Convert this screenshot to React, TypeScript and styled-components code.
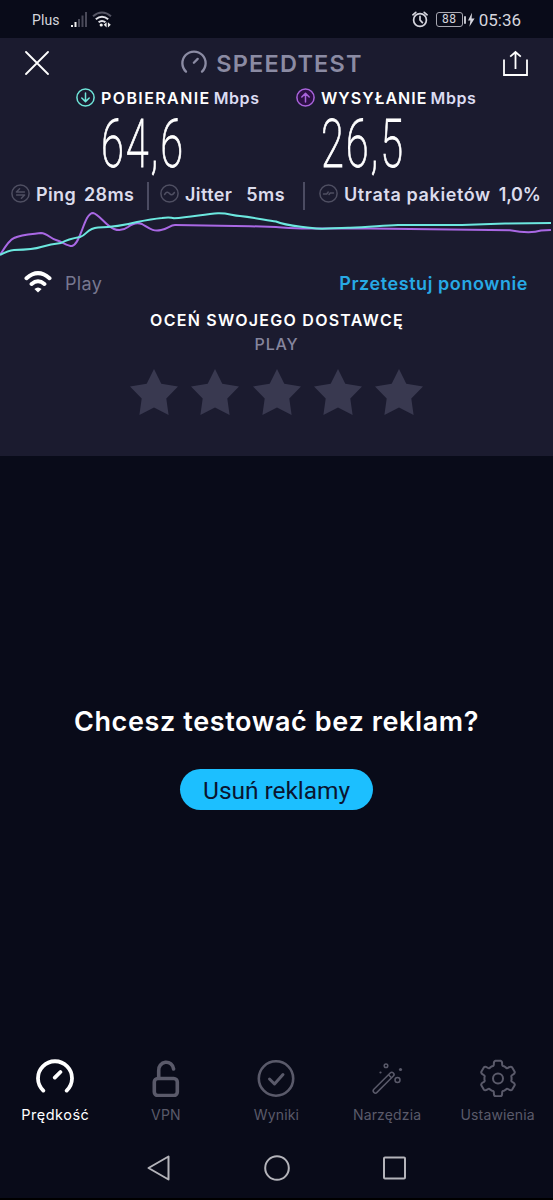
import React from "react";
import styled, { createGlobalStyle } from "styled-components";

const Global = createGlobalStyle`
  *, *::before, *::after { box-sizing: border-box; }
  html, body { margin: 0; background: #090b19; }
  body { font-family: Inter, "Liberation Sans", sans-serif; color: #fff; overflow: hidden; }
  svg { display: block; flex: none; }
  button { border: 0; padding: 0; margin: 0; background: none; color: inherit; font: inherit; }
`;

const Screen = styled.div`
  width: 553px;
  height: 1200px;
  display: flex;
  flex-direction: column;
  background: #090b19;
  border-bottom: 2px solid #000;
  overflow: hidden;
`;

const StatusBar = styled.header`
  height: 38px;
  padding: 1px 32px 0 32px;
  display: flex;
  align-items: center;
  font-family: Roboto, sans-serif;
  color: #d6d6de;
`;
const Carrier = styled.span`
  font-size: 14px;
  letter-spacing: 0.1px;
  width: 38px;
`;
const WifiStatus = styled.svg`
  margin-left: 4px;
`;
const StatusRight = styled.div`
  margin-left: auto;
  display: flex;
  align-items: center;
`;
const Battery = styled.span`
  width: 27px;
  height: 15px;
  margin-left: 8px;
  margin-right: 1px;
  border: 1px solid #a8a8b2;
  border-radius: 3px;
  font-size: 12px;
  line-height: 13px;
  letter-spacing: 0.4px;
  text-align: center;
`;
const Clock = styled.span`
  font-size: 17px;
  margin-left: 4px;
  letter-spacing: 0;
`;

const Panel = styled.section`
  height: 418px;
  background: #1b1b2f;
  display: flex;
  flex-direction: column;
`;
const TitleBar = styled.div`
  height: 50px;
  padding: 0 25px;
  display: flex;
  align-items: center;
  justify-content: space-between;
`;
const Brand = styled.div`
  display: flex;
  align-items: center;
  gap: 9px;
  margin-right: 8px;
  color: #8b8ba3;
  font-size: 23.5px;
  font-weight: 600;
  letter-spacing: 1.2px;
`;
const Results = styled.div`
  display: flex;
  height: 94px;
  padding-left: 76px;
`;
const Result = styled.div`
  width: 220px;
`;
const ResultLabel = styled.div`
  height: 19px;
  display: flex;
  align-items: center;
  font-size: 16px;
  font-weight: 600;
  white-space: nowrap;
`;
const ResultName = styled.span<{ $spacing: number }>`
  margin-left: 6px;
  padding-top: 1px;
  letter-spacing: ${(p) => p.$spacing}px;
`;
const Unit = styled.span`
  margin-left: 3px;
  padding-top: 1px;
  color: #dcdcf2;
  letter-spacing: 0.6px;
`;
const Value = styled.div`
  margin-left: 25px;
  height: 75px;
  line-height: 75px;
  font-family: Roboto, sans-serif;
  font-weight: 200;
  font-size: 66px;
  letter-spacing: 3px;
  -webkit-text-stroke: 0.8px #fff;
  width: max-content;
  transform: scaleX(0.63);
  transform-origin: left center;
`;

const Stats = styled.div`
  height: 28px;
  padding-left: 11px;
  display: flex;
  font-size: 18px;
  font-weight: 600;
  color: #dcdcec;
  white-space: nowrap;
`;
const Stat = styled.div<{ $width: number; $spacing: number; $gap: number; $valueSpacing?: number }>`
  width: ${(p) => p.$width}px;
  height: 23px;
  display: flex;
  align-items: center;
  letter-spacing: ${(p) => p.$spacing}px;
  span { margin-left: 6px; padding-top: 1px; }
  b {
    font-weight: 600;
    padding-top: 1px;
    margin-left: ${(p) => p.$gap}px;
    letter-spacing: ${(p) => p.$valueSpacing ?? p.$spacing}px;
  }
`;
const Divider = styled.i<{ $after: number }>`
  width: 2px;
  height: 28px;
  margin-right: ${(p) => p.$after}px;
  background: #4c4c62;
`;
const Provider = styled.div`
  height: 48px;
  padding: 0 25px 3px 24px;
  display: flex;
  align-items: center;
`;
const ProviderName = styled.span`
  margin-left: 13px;
  padding-top: 3px;
  color: #77778f;
  font-size: 18px;
  letter-spacing: 0.35px;
`;
const Retest = styled.button`
  margin-left: auto;
  padding-top: 3px;
  color: #27a9e5;
  font-size: 18px;
  font-weight: 600;
  letter-spacing: 0.57px;
`;
const Rating = styled.div`
  display: flex;
  flex-direction: column;
  align-items: center;
`;
const RatingTitle = styled.div`
  margin-top: 1px;
  height: 24px;
  line-height: 24px;
  font-size: 16px;
  font-weight: 600;
  letter-spacing: 1.25px;
  margin-left: 1px;
`;
const RatingName = styled.div`
  height: 24px;
  line-height: 24px;
  font-size: 16px;
  font-weight: 500;
  letter-spacing: 0.8px;
  color: #85859d;
`;
const Stars = styled.div`
  margin-top: 13px;
  display: flex;
  gap: 13.4px;
`;

const Promo = styled.main`
  flex: 1;
  display: flex;
  flex-direction: column;
  align-items: center;
  padding-top: 249px;
`;
const PromoTitle = styled.h1`
  margin: 0;
  height: 34px;
  line-height: 34px;
  font-size: 27px;
  font-weight: 600;
  letter-spacing: 0.62px;
  white-space: nowrap;
`;
const PromoButton = styled.button`
  margin-top: 30px;
  width: 193px;
  height: 41px;
  padding-top: 2px;
  border-radius: 21px;
  background: #1cbfff;
  color: #0a1530;
  font-family: Roboto, sans-serif;
  font-size: 24.5px;
  letter-spacing: -0.05px;
`;

const Tabs = styled.nav`
  height: 79px;
  display: flex;
`;
const Tab = styled.div<{ $active?: boolean }>`
  flex: 1;
  display: flex;
  flex-direction: column;
  align-items: center;
  color: ${(p) => (p.$active ? "#fff" : "#5a5a6a")};
  font-size: ${(p) => (p.$active ? 14.5 : 14)}px;
  letter-spacing: ${(p) => (p.$active ? 0.5 : 0.15)}px;
  span { margin-top: 8px; line-height: 20px; }
`;
const SystemNav = styled.footer`
  height: 60px;
  display: flex;
  justify-content: center;
  align-items: center;
  gap: 92px;
`;

const Gauge = ({ size, stroke }: { size: number; stroke: number }) => (
  <svg width={size} height={size} viewBox="0 0 38 38" fill="none" stroke="currentColor" strokeWidth={stroke} strokeLinecap="round">
    <path d="M7.3 31.6A17 17 0 1 1 30.7 31.6M18.8 18.6l5.6-5.6" />
  </svg>
);

const Ring = ({ color, fill = "none", children }: { color: string; fill?: string; children: React.ReactNode }) => (
  <svg width="19" height="19" viewBox="0 0 19 19" fill="none" stroke={color} strokeWidth="1.5" strokeLinecap="round" strokeLinejoin="round">
    <circle cx="9.5" cy="9.5" r="8.6" fill={fill} />
    {children}
  </svg>
);

const Star = () => (
  <svg width="48" height="46" viewBox="0 0 48 46" fill="#393950">
    <path d="M24 0 31.3 14.8 48 17.4 36.3 29.5 38.6 46 24 38.6 9.4 46 11.7 29.5 0 17.4 16.7 14.8Z" />
  </svg>
);

const gearPath = () => {
  const pts: string[] = [];
  for (let i = 0; i < 6; i++) {
    const at = (deg: number, r: number) => {
      const a = ((deg + i * 60 - 90) * Math.PI) / 180;
      return `${(19 + r * Math.cos(a)).toFixed(2)} ${(19 + r * Math.sin(a)).toFixed(2)}`;
    };
    pts.push(
      `${i ? "L" : "M"}${at(-25, 13.6)}Q${at(-18, 13)} ${at(-16, 15)}Q${at(-14, 18)} ${at(-8, 18)}L${at(8, 18)}Q${at(14, 18)} ${at(16, 15)}Q${at(18, 13)} ${at(25, 13.6)}`
    );
  }
  return pts.join("") + "Z";
};

export default function App() {
  return (
    <Screen>
      <Global />
      <StatusBar>
        <Carrier>Plus</Carrier>
        <svg width="18" height="17" viewBox="0 0 18 17">
          <path d="M1 14h2v2H1zM4.5 11h2v5h-2z" fill="#eee" />
          <path d="M8 8h2v8H8zM11.5 4.5h2V16h-2zM15 1h2v15h-2z" fill="#494958" />
        </svg>
        <WifiStatus width="20" height="17" viewBox="0 0 20 17" fill="none" strokeWidth="2">
          <path d="M1 5.3Q10-2.2 19 5.3" stroke="#555564" />
          <path d="M3.8 8.3q6.2-5 12.4 0M6.6 11.3q3.4-2.7 6.8 0" stroke="#e2e2e8" />
          <circle cx="9.2" cy="14" r="1.6" fill="#eee" />
          <path d="m14.6 11.2-2.9 2.6 2.9 2.6zM15.9 11.2l2.9 2.6-2.9 2.6z" fill="#eee" />
        </WifiStatus>
        <StatusRight>
          <svg width="16" height="17" viewBox="0 0 16 17" fill="none" stroke="#d6d6de" strokeWidth="1.7" strokeLinecap="round">
            <circle cx="8" cy="9" r="6.4" />
            <path d="M.9 3.8 3.8 1.3M15.1 3.8l-2.9-2.5M8 5.4V9l2.4 2.6" />
          </svg>
          <Battery>88</Battery>
          <svg width="11" height="16" viewBox="0 0 11 16" fill="#d6d6de">
            <path d="M.1 4.2h1.8v7.6H.1zM8 .8 4 8.6h2.4l-1 6.2L10.6 6.5H7.6z" />
          </svg>
          <Clock>05:36</Clock>
        </StatusRight>
      </StatusBar>

      <Panel>
        <TitleBar>
          <svg width="24" height="24" viewBox="0 0 24 24" stroke="#fff" strokeWidth="1.8" strokeLinecap="round">
            <path d="m1 1 22 22M23 1 1 23" />
          </svg>
          <Brand>
            <Gauge size={26} stroke={3.4} />
            SPEEDTEST
          </Brand>
          <svg width="25" height="26" viewBox="0 0 25 26" fill="none" stroke="#fff" strokeWidth="1.8">
            <path d="M1 9.5V25h23V9.5M12.5 19V2M7.2 6.7l5.3-4.7L17.8 6.7" />
          </svg>
        </TitleBar>

        <Results>
          <Result>
            <ResultLabel>
              <Ring color="#6fe6da"><path d="M9.5 5v8.5M5.8 10l3.7 3.6 3.7-3.6" /></Ring>
              <ResultName $spacing={1.4}>POBIERANIE</ResultName>
              <Unit>Mbps</Unit>
            </ResultLabel>
            <Value>64,6</Value>
          </Result>
          <Result>
            <ResultLabel>
              <Ring color="#a963dc" fill="#2d1045"><path d="M9.5 14V5.5M5.8 9l3.7-3.6L13.2 9" /></Ring>
              <ResultName $spacing={1.05}>WYSYŁANIE</ResultName>
              <Unit>Mbps</Unit>
            </ResultLabel>
            <Value>26,5</Value>
          </Result>
        </Results>

        <Stats>
          <Stat $width={136} $spacing={0.35} $gap={8}>
            <Ring color="#4f4f62"><path d="M13.4 8h-8l3.2-3.2M5.6 11h8l-3.2 3.2" /></Ring>
            <span>Ping</span><b>28ms</b>
          </Stat>
          <Divider $after={11} />
          <Stat $width={143} $spacing={0.4} $gap={14}>
            <Ring color="#4f4f62"><path d="M4.6 10.5q2.4-4 4.9-1t4.9-1" /></Ring>
            <span>Jitter</span><b>5ms</b>
          </Stat>
          <Divider $after={14} />
          <Stat $width={226} $spacing={0.62} $gap={8} $valueSpacing={-0.3}>
            <Ring color="#4f4f62"><path d="M4.5 10h3.2l1.5-2M10 10.5l1.3-1.5h3.2" /></Ring>
            <span>Utrata pakietów</span><b>1,0%</b>
          </Stat>
        </Stats>

        <svg width="553" height="49" viewBox="0 210 553 49" fill="none" strokeWidth="2">
          <path stroke="#a968e4" d="M0 255C5 247 9 240 14 238C22 234 34 234 41 233C47 233 51 239 56 240C63 242 67 246 72 246C81 244 84 213 93 213C99 214 106 226 114 229C119 231 124 230 128 227C133 223 137 222 142 224C149 228 153 232 161 230C168 229 170 225 175 225L250 226.2L276 227C290 228 300 229 312 228.5L370 228.5L510 230.3C522 232.5 535 232.5 541 230.5L551 230" />
          <path stroke="#6ce8df" d="M0 255Q8 250.5 14 250Q34 249.5 41 247Q51 244 61 243Q68 239 80 237C87 235 87 228 98 227.5Q118 227 137 222Q152 219 162 218Q170 217 174 218.3C190 217.5 205 214 218 213.3C228 213 232 215.5 240 216C255 217.5 267 220.5 276 221.5C286 226 298 226 312 228C322 230 336 227.5 350 227.8C370 227 383 225.5 398 225L462 225L505 223.5L551 223" />
        </svg>

        <Provider>
          <svg width="28" height="22" viewBox="0 0 28 22" fill="none" stroke="#fff" strokeWidth="4" strokeLinecap="round">
            <path d="M2.5 7.2Q14-2.8 25.5 7.2M7.6 13Q14 7.6 20.4 13" />
            <path d="m14 21.5-3.6-3.5Q14 15 17.6 18Z" fill="#fff" stroke="none" />
          </svg>
          <ProviderName>Play</ProviderName>
          <Retest>Przetestuj ponownie</Retest>
        </Provider>

        <Rating>
          <RatingTitle>OCEŃ SWOJEGO DOSTAWCĘ</RatingTitle>
          <RatingName>PLAY</RatingName>
          <Stars>
            {[0, 1, 2, 3, 4].map((i) => <Star key={i} />)}
          </Stars>
        </Rating>
      </Panel>

      <Promo>
        <PromoTitle>Chcesz testować bez reklam?</PromoTitle>
        <PromoButton>Usuń reklamy</PromoButton>
      </Promo>

      <Tabs>
        <Tab $active>
          <Gauge size={38} stroke={3.8} />
          <span>Prędkość</span>
        </Tab>
        <Tab>
          <svg width="38" height="38" viewBox="0 0 38 38" fill="none" stroke="currentColor" strokeWidth="3.6" strokeLinecap="round">
            <rect x="7.3" y="19.5" width="23" height="17" rx="3.5" />
            <path d="M11.7 18.5V11.5A7.3 7.3 0 0 1 26.6 10" />
          </svg>
          <span>VPN</span>
        </Tab>
        <Tab>
          <svg width="38" height="38" viewBox="0 0 38 38" fill="none" stroke="currentColor" strokeWidth="2.6" strokeLinecap="round" strokeLinejoin="round">
            <circle cx="19" cy="19.5" r="17.2" />
            <path d="m12.5 20 5 5 8.5-9.5" strokeWidth="3" />
          </svg>
          <span>Wyniki</span>
        </Tab>
        <Tab>
          <svg width="38" height="38" viewBox="0 0 38 38" fill="none" stroke="currentColor" strokeWidth="1.5">
            <rect x="-14.5" y="-2" width="27.5" height="4.4" rx="2.2" transform="translate(16 23) rotate(-45)" />
            <path d="m20.5 15.7 3 3" />
            <circle cx="18" cy="6.7" r="1.8" />
            <circle cx="29.5" cy="21" r="2.5" />
            <circle cx="32.5" cy="10.5" r="1.6" fill="currentColor" stroke="none" />
            <circle cx="12.5" cy="13.5" r="1.1" fill="currentColor" stroke="none" />
          </svg>
          <span>Narzędzia</span>
        </Tab>
        <Tab>
          <svg width="38" height="38" viewBox="0 -0.5 38 38" fill="none" stroke="currentColor" strokeWidth="2" strokeLinejoin="round">
            <path d={gearPath()} />
            <circle cx="19" cy="19" r="5" />
          </svg>
          <span>Ustawienia</span>
        </Tab>
      </Tabs>

      <SystemNav>
        <svg width="26" height="26" viewBox="0 0 26 26" fill="none" stroke="#b4b4ba" strokeWidth="2" strokeLinejoin="round">
          <path d="M22.5 1.5v23L2.5 13Z" />
        </svg>
        <svg width="26" height="26" viewBox="0 0 26 26" fill="none" stroke="#b4b4ba" strokeWidth="2">
          <circle cx="13" cy="13" r="11.8" />
        </svg>
        <svg width="26" height="26" viewBox="0 0 26 26" fill="none" stroke="#b4b4ba" strokeWidth="2">
          <rect x="2" y="2.5" width="21" height="21" rx="1" />
        </svg>
      </SystemNav>
    </Screen>
  );
}
